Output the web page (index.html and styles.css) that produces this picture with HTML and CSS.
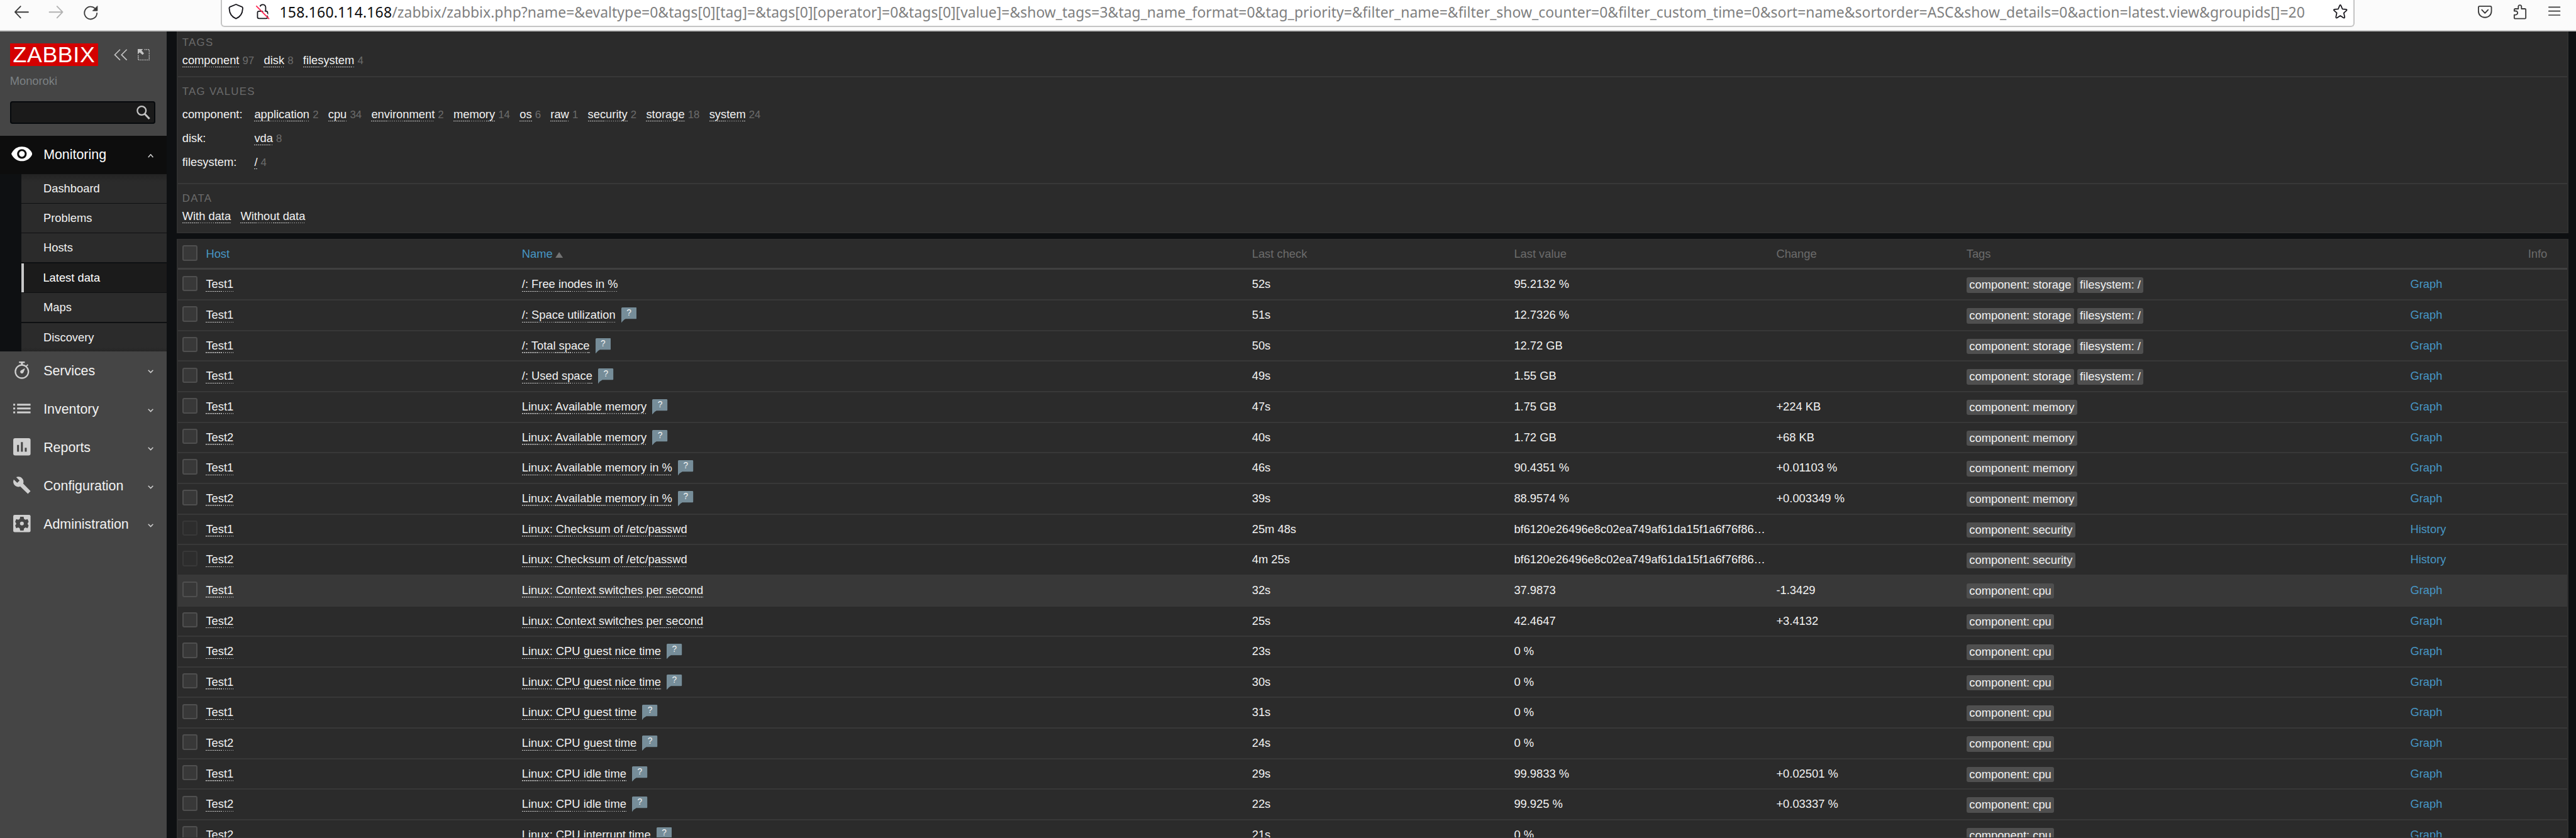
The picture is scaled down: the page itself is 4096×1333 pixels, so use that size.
FILE: index.html
```html
<!DOCTYPE html>
<html lang="en">
<head>
<meta charset="utf-8">
<title>Latest data</title>
<link rel="stylesheet" href="styles.css">
</head>
<body>
<svg class="defs" aria-hidden="true">
  <symbol id="down" viewBox="0 0 12 8"><path d="M1 1l5 5 5-5" fill="none" stroke="currentColor" stroke-width="2"/></symbol>
  <symbol id="up" viewBox="0 0 12 8"><path d="M1 7l5-6 5 6" fill="none" stroke="currentColor" stroke-width="2"/></symbol>
  <symbol id="bubble" viewBox="0 0 32 32"><path d="M2 0H30Q32 0 32 2V22Q32 24 30 24H9Q4 26 0 32V2Q0 0 2 0Z" fill="#768d99"/></symbol>
</svg>
<header class="toolbar">
  <svg class="tb back" viewBox="0 0 32 32"><path d="M30 16H3M14 4L2.500 16 14 28" fill="none" stroke="#3a3a3a" stroke-width="2.400" stroke-linecap="round" stroke-linejoin="round"/></svg>
  <svg class="tb forward" viewBox="0 0 32 32"><path d="M2 16H29M18 4L29.500 16 18 28" fill="none" stroke="#b2b2b2" stroke-width="2.400" stroke-linecap="round" stroke-linejoin="round"/></svg>
  <svg class="tb reload" viewBox="0 0 32 32"><path d="M29 17A13 13 0 1 1 25 7" fill="none" stroke="#3a3a3a" stroke-width="2.400" stroke-linecap="round"/><path d="M30 2V12H20Z" fill="#3a3a3a" stroke="#3a3a3a" stroke-linejoin="round"/></svg>
  <div class="urlbar">
    <svg class="tb shield" viewBox="0 0 32 32"><path d="M16 1.300L29 6.800Q30.300 7.500 30 10C29.500 20 25 27.500 16 30.800C7 27.500 2.500 20 2 10Q1.700 7.500 3 6.800Z" fill="none" stroke="#15141a" stroke-width="2.400" stroke-linejoin="round"/></svg>
    <svg class="tb lock" viewBox="0 0 32 32"><rect x="4.500" y="15.500" width="21" height="15" rx="3" fill="none" stroke="#15141a" stroke-width="2.300"/><path d="M9.500 6A6.200 6.200 0 0 1 21.500 7.500V15.500" fill="none" stroke="#15141a" stroke-width="2.300"/><path d="M5 3L30.500 28" stroke="#fff" stroke-width="2.600"/><path d="M2.500 5L28 31" stroke="#ff2a55" stroke-width="2.500" stroke-linecap="round"/></svg>
    <div class="url"><b>158.160.114.168</b>/zabbix/zabbix.php?name=&amp;evaltype=0&amp;tags[0][tag]=&amp;tags[0][operator]=0&amp;tags[0][value]=&amp;show_tags=3&amp;tag_name_format=0&amp;tag_priority=&amp;filter_name=&amp;filter_show_counter=0&amp;filter_custom_time=0&amp;sort=name&amp;sortorder=ASC&amp;show_details=0&amp;action=latest.view&amp;groupids[]=20</div>
    <svg class="tb star" viewBox="0 0 32 32"><path d="M16 2.500Q17 2.500 17.500 4L20.300 10.800 27.800 11.500Q30.800 12 28.700 14.200L23.300 19.200 25 27Q25.500 30.500 22.500 29.200L16 24.800 9.500 29.200Q6.500 30.500 7 27L8.700 19.200 3.300 14.200Q1.200 12 4.200 11.500L11.700 10.800 14.500 4Q15 2.500 16 2.500Z" fill="none" stroke="#15141a" stroke-width="2.300" stroke-linejoin="round"/></svg>
  </div>
  <svg class="tb pocket" viewBox="0 0 32 32"><path d="M5 5H27Q29.500 5 29.500 8V15C29.500 23 24 28.500 16 28.500S2.500 23 2.500 15V8Q2.500 5 5 5Z M9.500 12.500L16 19.500 22.500 12.500" fill="none" stroke="#3a3a3a" stroke-width="2.400" stroke-linecap="round" stroke-linejoin="round"/></svg>
  <svg class="tb ext" viewBox="0 0 32 32"><path d="M5 13Q5 10.500 7 10.500H13.500V5A3.500 3.500 0 0 1 20 5V10.500H27Q29 10.500 29 12.500V29Q29 31 27 31H7Q5 31 5 29V23H8A4 4 0 0 0 8 15H5Z" fill="none" stroke="#3a3a3a" stroke-width="2.400" stroke-linejoin="round"/></svg>
  <svg class="tb menu" viewBox="0 0 32 32"><path d="M5 7H28M5 15.300H28M5 23.600H28" stroke="#3a3a3a" stroke-width="2.200" stroke-linecap="round"/></svg>
</header>
<div class="page">
  <aside class="sidebar">
    <div class="brand">
      <div class="logo">ZABBIX</div>
      <svg class="collapse" viewBox="0 0 28 24"><path d="M13 1L2 12 13 23M27 1L16 12 27 23" fill="none" stroke="#c4c4c4" stroke-width="2.200"/></svg>
      <svg class="kiosk" viewBox="0 0 25 24"><path d="M0 0H11L8 3 13 9 10 12 4 7 0 11Z" fill="#c4c4c4"/><path d="M14 1H24V23H1V13" fill="none" stroke="#c4c4c4" stroke-width="2" stroke-dasharray="2 1.500"/></svg>
    </div>
    <div class="server">Monoroki</div>
    <div class="search"><svg viewBox="0 0 28 29"><circle cx="10.800" cy="10.500" r="9" fill="none" stroke="#c4c4c4" stroke-width="3"/><path d="M17 17L27 27.500" stroke="#c4c4c4" stroke-width="4"/></svg></div>
    <nav>
      <div class="item open"><svg class="ico" viewBox="0 0 44 44"><path d="M0 22C5 11 13 7 22 7S39 11 44 22C39 33 31 37 22 37S5 33 0 22Z" fill="#fff"/><circle cx="22" cy="22" r="10" fill="#0d0d0d"/><circle cx="22" cy="22" r="6" fill="#fff"/></svg><span>Monitoring</span><svg class="chev"><use href="#up"/></svg></div>
      <div class="submenu">
        <div>Dashboard</div><div>Problems</div><div>Hosts</div><div class="active">Latest data</div><div>Maps</div><div>Discovery</div>
      </div>
      <div class="item"><svg class="ico" viewBox="0 0 44 44"><g fill="none" stroke="#cfcfcf"><circle cx="22" cy="25" r="13.600" stroke-width="3"/><path d="M16 5.500H28" stroke-width="3"/><path d="M22 6V11" stroke-width="4"/><path d="M31 14L34.500 10.500" stroke-width="2.500"/></g><path d="M27 18.500Q28.500 18 28 20L25.300 26.500A3.500 3.500 0 1 1 20 22.500Z" fill="#cfcfcf"/></svg><span>Services</span><svg class="chev"><use href="#down"/></svg></div>
      <div class="item"><svg class="ico" viewBox="0 0 44 44"><path d="M4 12h4v4H4zM12 12H40v4H12zM4 20h4v4H4zM12 20H40v4H12zM4 28h4v4H4zM12 28H40v4H12z" fill="#cfcfcf"/></svg><span>Inventory</span><svg class="chev"><use href="#down"/></svg></div>
      <div class="item"><svg class="ico" viewBox="0 0 44 44"><rect x="4" y="4" width="36" height="36" rx="4" fill="#cfcfcf"/><path d="M12 18h4v14h-4zM20 12h4v20h-4zM28 24h4v8h-4z" fill="#454545"/></svg><span>Reports</span><svg class="chev"><use href="#down"/></svg></div>
      <div class="item"><svg class="ico" viewBox="0 0 44 44"><path transform="translate(2.500 2.500) scale(1.630)" d="M23 19.600l-9.400-9.700c.9-2.300.4-5-1.500-6.900-2-2-5-2.400-7.400-1.300L9 6 6 9 1.600 4.700C.4 7.100.9 10.100 2.900 12.100c1.900 1.900 4.600 2.400 6.900 1.500L19.600 23Z" fill="#cfcfcf"/></svg><span>Configuration</span><svg class="chev"><use href="#down"/></svg></div>
      <div class="item"><svg class="ico" viewBox="0 0 44 44"><rect x="4" y="4" width="36" height="36" rx="3" fill="#cfcfcf"/><path d="M18.500 8h7l1 4.500 3 1.700 4.300-1.500 2.200 5.500-2 3v2l2 3-2.200 5.500-4.300-1.500-3 1.700-1 4.600h-7l-1-4.600-3-1.700-4.300 1.500-2.200-5.500 2-3v-2l-2-3 2.200-5.500 4.300 1.500 3-1.700z" fill="#454545"/><circle cx="22" cy="22" r="4" fill="#cfcfcf"/></svg><span>Administration</span><svg class="chev"><use href="#down"/></svg></div>
    </nav>
  </aside>
  <main class="content">
    <section class="filter">
      <div class="group tags"><h4>TAGS</h4>
        <div class="line"><span><a>component</a> <i>97</i></span><span><a>disk</a> <i>8</i></span><span><a>filesystem</a> <i>4</i></span></div></div>
      <div class="group values"><h4>TAG VALUES</h4>
        <div class="line"><label>component:</label><span><a>application</a> <i>2</i></span><span><a>cpu</a> <i>34</i></span><span><a>environment</a> <i>2</i></span><span><a>memory</a> <i>14</i></span><span><a>os</a> <i>6</i></span><span><a>raw</a> <i>1</i></span><span><a>security</a> <i>2</i></span><span><a>storage</a> <i>18</i></span><span><a>system</a> <i>24</i></span></div>
        <div class="line"><label>disk:</label><span><a>vda</a> <i>8</i></span></div>
        <div class="line"><label>filesystem:</label><span><a>/</a> <i>4</i></span></div></div>
      <div class="group data"><h4>DATA</h4>
        <div class="line"><span><a>With data</a></span><span><a>Without data</a></span></div></div>
    </section>
    <section class="table">
      <div class="row head"><div><span class="cb"></span></div><div class="blue">Host</div><div class="blue">Name<svg class="sort" viewBox="0 0 16 12"><path d="M8 0L16 12H0Z" fill="#737373"/></svg></div><div>Last check</div><div>Last value</div><div>Change</div><div>Tags</div><div></div><div>Info</div></div>
      <div class="row"><div><span class="cb"></span></div><div><a>Test1</a></div><div><a>/: Free inodes in %</a></div><div>52s</div><div>95.2132 %</div><div></div><div><em>component: storage</em><em>filesystem: /</em></div><div class="blue">Graph</div><div></div></div>
      <div class="row"><div><span class="cb"></span></div><div><a>Test1</a></div><div><a>/: Space utilization</a><span class="help"><svg><use href="#bubble"/></svg><b>?</b></span></div><div>51s</div><div>12.7326 %</div><div></div><div><em>component: storage</em><em>filesystem: /</em></div><div class="blue">Graph</div><div></div></div>
      <div class="row"><div><span class="cb"></span></div><div><a>Test1</a></div><div><a>/: Total space</a><span class="help"><svg><use href="#bubble"/></svg><b>?</b></span></div><div>50s</div><div>12.72 GB</div><div></div><div><em>component: storage</em><em>filesystem: /</em></div><div class="blue">Graph</div><div></div></div>
      <div class="row"><div><span class="cb"></span></div><div><a>Test1</a></div><div><a>/: Used space</a><span class="help"><svg><use href="#bubble"/></svg><b>?</b></span></div><div>49s</div><div>1.55 GB</div><div></div><div><em>component: storage</em><em>filesystem: /</em></div><div class="blue">Graph</div><div></div></div>
      <div class="row"><div><span class="cb"></span></div><div><a>Test1</a></div><div><a>Linux: Available memory</a><span class="help"><svg><use href="#bubble"/></svg><b>?</b></span></div><div>47s</div><div>1.75 GB</div><div>+224 KB</div><div><em>component: memory</em></div><div class="blue">Graph</div><div></div></div>
      <div class="row"><div><span class="cb"></span></div><div><a>Test2</a></div><div><a>Linux: Available memory</a><span class="help"><svg><use href="#bubble"/></svg><b>?</b></span></div><div>40s</div><div>1.72 GB</div><div>+68 KB</div><div><em>component: memory</em></div><div class="blue">Graph</div><div></div></div>
      <div class="row"><div><span class="cb"></span></div><div><a>Test1</a></div><div><a>Linux: Available memory in %</a><span class="help"><svg><use href="#bubble"/></svg><b>?</b></span></div><div>46s</div><div>90.4351 %</div><div>+0.01103 %</div><div><em>component: memory</em></div><div class="blue">Graph</div><div></div></div>
      <div class="row"><div><span class="cb"></span></div><div><a>Test2</a></div><div><a>Linux: Available memory in %</a><span class="help"><svg><use href="#bubble"/></svg><b>?</b></span></div><div>39s</div><div>88.9574 %</div><div>+0.003349 %</div><div><em>component: memory</em></div><div class="blue">Graph</div><div></div></div>
      <div class="row"><div><span class="cb off"></span></div><div><a>Test1</a></div><div><a>Linux: Checksum of /etc/passwd</a></div><div>25m 48s</div><div>bf6120e26496e8c02ea749af61da15f1a6f76f86…</div><div></div><div><em>component: security</em></div><div class="blue">History</div><div></div></div>
      <div class="row"><div><span class="cb off"></span></div><div><a>Test2</a></div><div><a>Linux: Checksum of /etc/passwd</a></div><div>4m 25s</div><div>bf6120e26496e8c02ea749af61da15f1a6f76f86…</div><div></div><div><em>component: security</em></div><div class="blue">History</div><div></div></div>
      <div class="row hover"><div><span class="cb"></span></div><div><a>Test1</a></div><div><a>Linux: Context switches per second</a></div><div>32s</div><div>37.9873</div><div>-1.3429</div><div><em>component: cpu</em></div><div class="blue">Graph</div><div></div></div>
      <div class="row"><div><span class="cb"></span></div><div><a>Test2</a></div><div><a>Linux: Context switches per second</a></div><div>25s</div><div>42.4647</div><div>+3.4132</div><div><em>component: cpu</em></div><div class="blue">Graph</div><div></div></div>
      <div class="row"><div><span class="cb"></span></div><div><a>Test2</a></div><div><a>Linux: CPU guest nice time</a><span class="help"><svg><use href="#bubble"/></svg><b>?</b></span></div><div>23s</div><div>0 %</div><div></div><div><em>component: cpu</em></div><div class="blue">Graph</div><div></div></div>
      <div class="row"><div><span class="cb"></span></div><div><a>Test1</a></div><div><a>Linux: CPU guest nice time</a><span class="help"><svg><use href="#bubble"/></svg><b>?</b></span></div><div>30s</div><div>0 %</div><div></div><div><em>component: cpu</em></div><div class="blue">Graph</div><div></div></div>
      <div class="row"><div><span class="cb"></span></div><div><a>Test1</a></div><div><a>Linux: CPU guest time</a><span class="help"><svg><use href="#bubble"/></svg><b>?</b></span></div><div>31s</div><div>0 %</div><div></div><div><em>component: cpu</em></div><div class="blue">Graph</div><div></div></div>
      <div class="row"><div><span class="cb"></span></div><div><a>Test2</a></div><div><a>Linux: CPU guest time</a><span class="help"><svg><use href="#bubble"/></svg><b>?</b></span></div><div>24s</div><div>0 %</div><div></div><div><em>component: cpu</em></div><div class="blue">Graph</div><div></div></div>
      <div class="row"><div><span class="cb"></span></div><div><a>Test1</a></div><div><a>Linux: CPU idle time</a><span class="help"><svg><use href="#bubble"/></svg><b>?</b></span></div><div>29s</div><div>99.9833 %</div><div>+0.02501 %</div><div><em>component: cpu</em></div><div class="blue">Graph</div><div></div></div>
      <div class="row"><div><span class="cb"></span></div><div><a>Test2</a></div><div><a>Linux: CPU idle time</a><span class="help"><svg><use href="#bubble"/></svg><b>?</b></span></div><div>22s</div><div>99.925 %</div><div>+0.03337 %</div><div><em>component: cpu</em></div><div class="blue">Graph</div><div></div></div>
      <div class="row"><div><span class="cb"></span></div><div><a>Test2</a></div><div><a>Linux: CPU interrupt time</a><span class="help"><svg><use href="#bubble"/></svg><b>?</b></span></div><div>21s</div><div>0 %</div><div></div><div><em>component: cpu</em></div><div class="blue">Graph</div><div></div></div>
    </section>
  </main>
</div>
</body>
</html>
```
FILE: styles.css
```css
/* All lengths are in rem; 1rem is 100 device units of the design. */
* { box-sizing: border-box; }
html { font-size: 76.45px; }
body {
  margin: 0;
  height: 100vh;
  overflow: hidden;
  display: flex;
  flex-direction: column;
  background: #0e1012;
  color: #f2f2f2;
  font: 0.24rem/0.28rem "Liberation Sans", Arial, sans-serif;
}
svg { display: block; flex: none; }
.defs { width: 0; height: 0; position: absolute; }

.toolbar {
  flex: none;
  height: 0.66rem;
  border-bottom: 2px solid #c4c4c4;
  background: #fbfbfb;
  display: flex;
  align-items: flex-start;
}
.tb { width: 0.32rem; height: 0.32rem; margin-top: 0.08rem; }
.back { margin-left: 0.29rem; margin-top: 0.09rem; }
.forward { margin-left: 0.4rem; margin-top: 0.09rem; }
.reload { margin-left: 0.4rem; margin-top: 0.1rem; }
.urlbar {
  margin-left: 2.54rem;
  width: 44.39rem;
  height: 0.56rem;
  border: 2px solid #c4c4c4;
  border-top: 0;
  border-radius: 0 0 0.08rem 0.08rem;
  background: #fff;
  display: flex;
  align-items: flex-start;
}
.shield { margin-left: 0.13rem; }
.lock { margin-left: 0.25rem; }
.url {
  margin-left: 0.18rem;
  width: 42.7rem;
  height: 0.5rem;
  line-height: 0.5rem;
  white-space: nowrap;
  font-family: "Noto Sans", sans-serif;
  font-size: 0.3rem;
  letter-spacing: 0.0002rem;
  color: #7f7f7f;
}
.url b { font-weight: 400; letter-spacing: 0.0025rem; color: #0c0c0d; }
.star { margin-left: 0; }
.pocket { margin-left: 2.55rem; }
.ext { margin-left: 0.4rem; }
.menu { margin-left: 0.4rem; }

.page { flex: 1; min-height: 0; display: flex; }
.sidebar { width: 3.47rem; flex: none; background: #454545; }
.brand { display: flex; padding: 0.24rem 0 0 0.215rem; height: 0.72rem; }
.logo {
  width: 1.82rem;
  height: 0.48rem;
  background: #d40000;
  color: #fff;
  font-size: 0.468rem;
  line-height: 0.49rem;
  letter-spacing: 0.008rem;
  padding-left: 0.053rem;
}
.collapse { width: 0.28rem; height: 0.24rem; margin: 0.12rem 0 0 0.335rem; }
.kiosk { width: 0.25rem; height: 0.24rem; margin: 0.12rem 0 0 0.22rem; }
.server { height: 0.72rem; padding: 0.17rem 0 0 0.205rem; color: #7b8083; }
.search {
  margin: 0 0.24rem 0.24rem 0.21rem;
  height: 0.48rem;
  border: 2px solid #06090c;
  border-radius: 0.05rem;
  background: #1a1a1a;
  display: flex;
  justify-content: flex-end;
  padding: 0.07rem 0.08rem;
}
.search svg { width: 0.28rem; height: 0.29rem; }
.item {
  height: 0.8rem;
  display: flex;
  align-items: center;
  padding: 0 0.28rem 0 0.23rem;
  font-size: 0.28rem;
}
.item span { flex: 1; margin-left: 0.235rem; padding-top: 0.01rem; }
.item.open { background: #0d0d0d; color: #fff; }
.ico { width: 0.44rem; height: 0.44rem; margin-top: -0.04rem; }
.chev { width: 0.12rem; height: 0.08rem; margin-top: 0.04rem; color: #cfcfcf; }
.submenu {
  background: #0e1012;
  padding-left: 0.45rem;
  display: grid;
  grid-auto-rows: 0.6rem;
  gap: 0.02rem;
}
.submenu div { background: #2b2b2b; padding: 0.157rem 0 0 0.453rem; }
.submenu div:first-child { background: linear-gradient(#232323, #2b2b2b 0.16rem); }
.submenu div:last-child { background: linear-gradient(#2b2b2b 0.5rem, #262626); }
.submenu .active { background: #1b1b1b; color: #fff; border-left: 0.06rem solid #c8c8c8; padding-left: 0.393rem; }

.content {
  flex: 1;
  min-width: 0;
  padding: 0 0.16rem 0 0.2rem;
  display: flex;
  flex-direction: column;
  gap: 0.12rem;
}
.filter, .table { background: #2b2b2b; border: 1px solid #303030; border-width: 1px 2px; }
.filter { flex: none; height: 4.19rem; border-top: 0; border-bottom-width: 2px; }
.table { flex: 1; min-height: 0; overflow: hidden; }
.group { padding: 0 0.094rem; border-bottom: 2px solid #383838; }
.tags { height: 0.95rem; }
.values { height: 2.22rem; }
.data { border: 0; }
.group h4 {
  margin: 0 0 0.034rem;
  font-weight: 400;
  font-size: 0.22rem;
  line-height: 0.24rem;
  letter-spacing: 0.017rem;
  color: #6b6b6b;
}
.tags h4 { padding-top: 0.117rem; }
.values h4 { padding-top: 0.187rem; margin-bottom: 0.134rem; }
.data h4 { padding-top: 0.187rem; }
.line { display: flex; gap: 0.2rem; height: 0.5rem; padding-top: 0.06rem; }
.line label { width: 1.3rem; }
.line i { font-style: normal; font-size: 0.22rem; color: #6b6b6b; }
a {
  padding-bottom: 0.02rem;
  background: repeating-linear-gradient(90deg, #c9c9c9 0 0.02rem, transparent 0.02rem 0.04rem) left bottom / 100% 1.5px no-repeat;
}
.blue { color: #4796c4; }

.row {
  display: grid;
  grid-template-columns: 0.493rem 6.572rem 15.185rem 5.45rem 5.455rem 3.955rem 9.23rem 2.45rem 1fr;
  height: 0.6364rem;
  padding-left: 0.094rem;
  border-bottom: 2px solid #383838;
}
.row > div { display: flex; align-items: flex-start; padding-top: 0.157rem; white-space: nowrap; }
.row > div:first-child { padding-top: 0.12rem; }
.head { height: 0.635rem; border-bottom: 3px solid #404040; color: #6b6b6b; }
.head > div { padding-top: 0.164rem; }
.head > .blue { color: #4796c4; }
.hover { background: #383838; }
.cb { width: 0.32rem; height: 0.32rem; border: 2px solid #4f4f4f; border-radius: 0.04rem; background: #383838; }
.cb.off { background: #2d2d2d; border-color: #383838; }
.sort { width: 0.16rem; height: 0.12rem; margin: 0.1rem 0 0 0.055rem; }
.help { display: grid; width: 0.32rem; height: 0.32rem; margin: -0.015rem 0 0 0.12rem; }
.help svg, .help b { grid-area: 1 / 1; width: 0.32rem; height: 0.32rem; }
.help b { font-weight: 400; font-size: 0.18rem; line-height: 0.24rem; text-align: center; }
em {
  font-style: normal;
  height: 0.32rem;
  line-height: 0.32rem;
  padding: 0 0.06rem;
  margin-right: 0.06rem;
  border-radius: 0.04rem;
  background: #4f4f4f;
}
```
